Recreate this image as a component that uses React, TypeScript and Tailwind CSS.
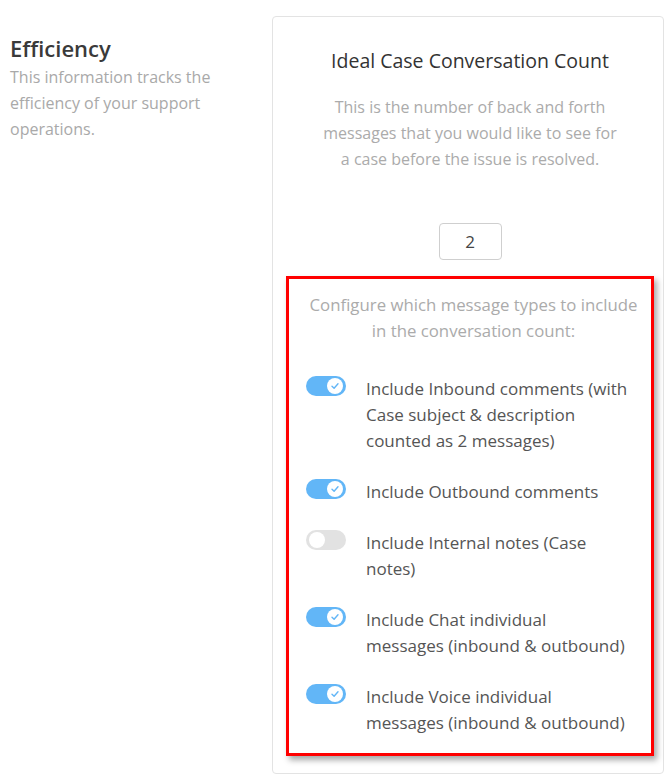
import React, { useState } from "react";

const options = [
    { label: "Include Inbound comments (with\nCase subject & description\ncounted as 2 messages)", on: true },
    { label: "Include Outbound comments", on: true },
    { label: "Include Internal notes (Case\nnotes)", on: false },
    { label: "Include Chat individual\nmessages (inbound & outbound)", on: true },
    { label: "Include Voice individual\nmessages (inbound & outbound)", on: true },
];

function Toggle({ on, onClick }: { on: boolean; onClick: () => void }) {
    return (
        <button
            onClick={onClick}
            className={`relative shrink-0 w-[40px] h-[20px] rounded-full ${on ? "bg-[#62b6f7]" : "bg-[#e2e2e2]"}`}
        >
            <span
                className={`absolute top-[2px] w-[16px] h-[16px] rounded-full bg-white flex items-center justify-center ${on ? "right-[3px]" : "left-[3px]"}`}
            >
                {on && (
                    <svg width="10" height="10" viewBox="0 0 10 10" fill="none">
                        <path d="M2 5.2 L4.1 7.2 L8 2.8" stroke="#62b6f7" strokeWidth="1.4" strokeLinecap="round" strokeLinejoin="round" />
                    </svg>
                )}
            </span>
        </button>
    );
}

export default function App() {
    const [state, setState] = useState(options.map((o) => o.on));
    const [count, setCount] = useState("2");

    return (
        <div className="min-h-screen bg-white flex font-['Open_Sans',sans-serif]">
            <div className="w-[272px] shrink-0 pl-[10px] pr-[40px] pt-[34px]">
                <h2 className="text-[22px] leading-[28px] font-semibold text-[#3a3a3a]">Efficiency</h2>
                <p className="text-[16px] leading-[26px] text-[#a9a9a9] mt-[2px]">
                    This information tracks the efficiency of your support operations.
                </p>
            </div>

            <div className="w-[392px] shrink-0 mt-[16px] mb-[9px] border border-[#e3e3e3] rounded-[4px] pt-[31px] pl-[13px] pr-[9px] pb-[17px] flex flex-col items-center">
                <h3 className="text-[19.5px] leading-[26px] font-medium text-[#333]">Ideal Case Conversation Count</h3>
                <p className="mt-[20px] text-[16px] leading-[26px] text-[#ababab] text-center px-[36px]">
                    This is the number of back and forth messages that you would like to see for a case before the issue is resolved.
                </p>
                <input
                    value={count}
                    onChange={(e) => setCount(e.target.value)}
                    className="mt-[51px] w-[63px] h-[37px] border border-[#cfcfcf] rounded-[4px] text-center text-[17px] text-[#444] outline-none"
                />

                <div className="mt-[16px] w-[368px] border-[3px] border-[#ff0000] shadow-[3px_4px_6px_rgba(0,0,0,0.35)] pt-[13px] pb-[17px] pl-[17px] pr-[10px]">
                    <p className="text-[16.8px] leading-[26px] text-[#ababab] text-center">
                        Configure which message types to include in the conversation count:
                    </p>
                    <div className="mt-[32px] flex flex-col gap-[25px]">
                        {options.map((o, i) => (
                            <div key={i} className="flex items-start gap-[20px]">
                                <Toggle
                                    on={state[i]}
                                    onClick={() => setState(state.map((s, j) => (j === i ? !s : s)))}
                                />
                                <span className="whitespace-pre-line text-[17px] leading-[26px] text-[#555]">{o.label}</span>
                            </div>
                        ))}
                    </div>
                </div>
            </div>
        </div>
    );
}
